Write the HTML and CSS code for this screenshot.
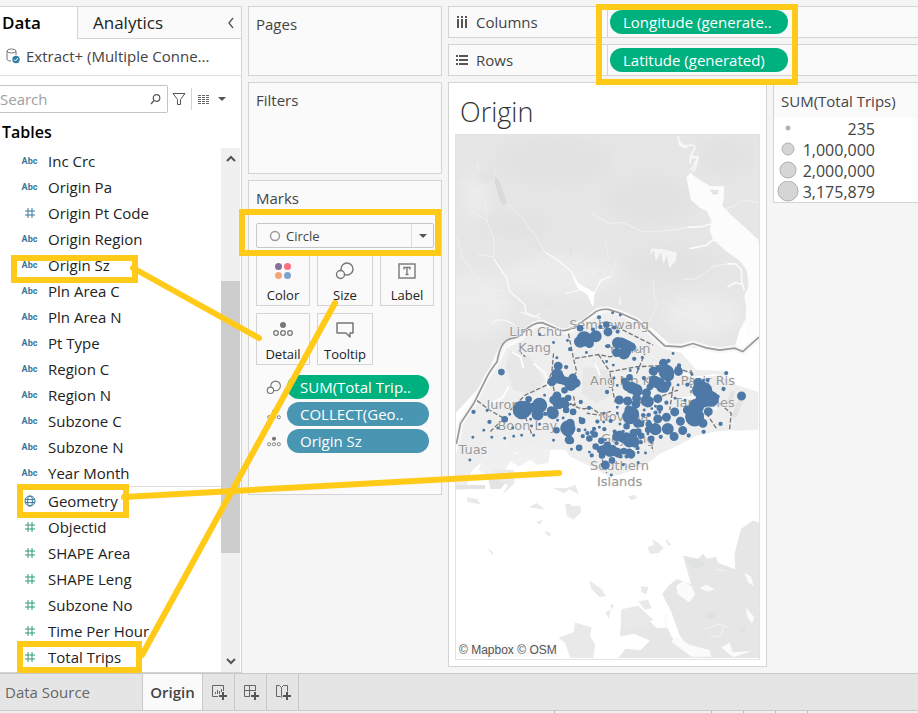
FILE: index.html
```html
<!DOCTYPE html>
<html lang="en">
<head>
<meta charset="utf-8">
<title>Origin</title>
<link rel="stylesheet" href="styles.css">
</head>
<body>
<svg class="symbols" aria-hidden="true">
  <symbol id="hash" viewBox="0 0 12 12"><path d="M4 1v10M8 1v10M1 4h10M1 8h10" fill="none" stroke="currentColor"/></symbol>
  <symbol id="globe" viewBox="0 0 12 12"><g fill="none" stroke="currentColor"><circle cx="6" cy="6" r="5"/><ellipse cx="6" cy="6" rx="2.4" ry="5"/><path d="M1 4.4h10M1 7.6h10"/></g></symbol>
  <symbol id="size" viewBox="0 0 20 18"><g fill="#fafafa" stroke="currentColor" stroke-width="1.4"><circle cx="12" cy="7" r="6"/><circle cx="5.5" cy="12.5" r="4"/></g></symbol>
  <symbol id="detail" viewBox="0 0 20 16"><circle cx="10" cy="4" r="3" fill="currentColor"/><g fill="none" stroke="currentColor" stroke-width="1.3"><circle cx="3" cy="12" r="2.3"/><circle cx="10" cy="12" r="2.3"/><circle cx="17" cy="12" r="2.3"/></g></symbol>
</svg>

<div class="workspace">
  <aside class="sidebar">
    <div class="side-tabs">
      <button class="side-tab active">Data</button>
      <button class="side-tab">Analytics</button>
      <button class="collapse" aria-label="Collapse"><svg width="8" height="12" viewBox="0 0 8 12"><path d="M6 1 2 6l4 5" fill="none" stroke="#555" stroke-width="1.3"/></svg></button>
    </div>
    <div class="source">
      <svg width="15" height="16" viewBox="0 0 15 16"><path d="M10 7V3M1 3v8c0 1.5 2 2 4 2" fill="none" stroke="#777"/><ellipse cx="5.5" cy="3" rx="4.5" ry="2" fill="none" stroke="#777"/><circle cx="10" cy="11.5" r="3.7" fill="#2f7fa5"/><path d="m8 11.5 1.5 1.5 2.5-3" fill="none" stroke="#fff"/></svg>
      <span>Extract+ (Multiple Conne...</span>
    </div>
    <div class="search-row">
      <div class="search-box">
        <input type="text" placeholder="Search" aria-label="Search">
        <svg width="11" height="11" viewBox="0 0 11 11"><g fill="none" stroke="#555" stroke-width="1.2"><circle cx="6.5" cy="4" r="3.3"/><path d="M4 6.5 1 10"/></g></svg>
      </div>
      <button class="tool" aria-label="Filter fields"><svg width="14" height="14" viewBox="0 0 14 14"><path d="M1 1.5h12L8.5 7.5v5h-3v-5z" fill="none" stroke="#555"/></svg></button>
      <button class="tool view-as" aria-label="View as"><svg width="12" height="11" viewBox="0 0 12 11"><path d="M0 1.5h12M0 3.5h12M0 5.5h12M0 7.5h12M0 9.5h12" stroke="#666" stroke-dasharray="3 1"/></svg><i class="caret"></i></button>
    </div>
    <h2 class="tables">Tables</h2>
    <div class="fields">
      <div class="field-lists">
        <ul class="dimensions">
          <li><b>Abc</b>Inc Crc</li>
          <li><b>Abc</b>Origin Pa</li>
          <li><b><svg><use href="#hash"/></svg></b>Origin Pt Code</li>
          <li><b>Abc</b>Origin Region</li>
          <li><b>Abc</b>Origin Sz</li>
          <li><b>Abc</b>Pln Area C</li>
          <li><b>Abc</b>Pln Area N</li>
          <li><b>Abc</b>Pt Type</li>
          <li><b>Abc</b>Region C</li>
          <li><b>Abc</b>Region N</li>
          <li><b>Abc</b>Subzone C</li>
          <li><b>Abc</b>Subzone N</li>
          <li><b>Abc</b>Year Month</li>
        </ul>
        <ul class="measures">
          <li class="geo"><b><svg><use href="#globe"/></svg></b>Geometry</li>
          <li><b><svg><use href="#hash"/></svg></b>Objectid</li>
          <li><b><svg><use href="#hash"/></svg></b>SHAPE Area</li>
          <li><b><svg><use href="#hash"/></svg></b>SHAPE Leng</li>
          <li><b><svg><use href="#hash"/></svg></b>Subzone No</li>
          <li><b><svg><use href="#hash"/></svg></b>Time Per Hour</li>
          <li><b><svg><use href="#hash"/></svg></b>Total Trips</li>
        </ul>
      </div>
      <div class="scrollbar">
        <svg width="12" height="8" viewBox="0 0 12 8"><path d="m2 6 4-4 4 4" fill="none" stroke="#555" stroke-width="2"/></svg>
        <div class="track"><div class="thumb"></div></div>
        <svg width="12" height="8" viewBox="0 0 12 8"><path d="m2 2 4 4 4-4" fill="none" stroke="#555" stroke-width="2"/></svg>
      </div>
    </div>
  </aside>

  <section class="cards">
    <div class="card pages"><h3>Pages</h3></div>
    <div class="card filters"><h3>Filters</h3></div>
    <div class="card marks">
      <h3>Marks</h3>
      <div class="mark-type">
        <svg width="12" height="12" viewBox="0 0 12 12"><circle cx="6" cy="6" r="4.5" fill="none" stroke="#999" stroke-width="1.4"/></svg>
        <select aria-label="Mark type"><option>Circle</option></select>
        <span class="drop"><i class="caret"></i></span>
      </div>
      <div class="mark-buttons">
        <button><svg width="18" height="18" viewBox="0 0 18 18"><circle cx="4.5" cy="4.5" r="3.5" fill="#85709b"/><circle cx="13.5" cy="4.5" r="3.5" fill="#f96f83"/><circle cx="4.5" cy="13.5" r="3.5" fill="#f4a67a"/><circle cx="13.5" cy="13.5" r="3.5" fill="#7ea2cb"/></svg>Color</button>
        <button><svg width="20" height="18"><use href="#size"/></svg>Size</button>
        <button><svg width="20" height="18" viewBox="0 0 20 18"><rect x="2" y="2" width="16" height="14" fill="none" stroke="#777" stroke-width="1.4"/><path d="M7 7.5V5.5h6v2M10 5.5v7M8.5 12.5h3" fill="none" stroke="#777" stroke-width="1.3"/></svg>Label</button>
        <button><svg width="20" height="16"><use href="#detail"/></svg>Detail</button>
        <button><svg width="20" height="18" viewBox="0 0 20 18"><path d="M2 2h16v10h-3v4l-4-4H2z" fill="none" stroke="#777" stroke-width="1.5" stroke-linejoin="round"/></svg>Tooltip</button>
      </div>
      <ul class="mark-pills">
        <li><svg width="16" height="15"><use href="#size"/></svg><span class="pill green">SUM(Total Trip..</span></li>
        <li><svg width="14" height="11"><use href="#detail"/></svg><span class="pill blue">COLLECT(Geo..</span></li>
        <li><svg width="14" height="11"><use href="#detail"/></svg><span class="pill blue">Origin Sz</span></li>
      </ul>
    </div>
  </section>

  <main class="main">
    <div class="shelf">
      <div class="shelf-name"><svg width="12" height="12" viewBox="0 0 12 12"><path d="M2 0v2M6 0v2M10 0v2M2 3v9M6 3v9M10 3v9" stroke="#555" stroke-width="2"/></svg>Columns</div>
      <span class="pill green">Longitude (generate..</span>
    </div>
    <div class="shelf">
      <div class="shelf-name"><svg width="12" height="12" viewBox="0 0 12 12"><path d="M0 2h2M0 6h2M0 10h2M3 2h9M3 6h9M3 10h9" stroke="#555" stroke-width="2"/></svg>Rows</div>
      <span class="pill green">Latitude (generated)</span>
    </div>
    <div class="canvas">
      <div class="view">
        <h1>Origin</h1>
        <div class="map">
          <svg viewBox="455 134 305 526" preserveAspectRatio="xMidYMid slice" role="img" aria-label="Map of trip origins">
            <defs><filter id="soft" x="-30%" y="-30%" width="160%" height="160%"><feGaussianBlur stdDeviation="7"/></filter></defs>
            <rect x="455" y="134" width="305" height="526" fill="#fff"/>
            <path d="M455 134h305v107l-6 8-1 20-5 20v27l-8 14-5 18-12 2-35-3-18-3-18-16-25-10-27-7-18 8-16 10-25-5-18 8-24 15-22 46-15 26-7 20z" fill="#e6e6e6"/>
            <g fill="#e2e2e2" filter="url(#soft)"><ellipse cx="555" cy="160" rx="60" ry="25"/><ellipse cx="650" cy="200" rx="45" ry="25"/><ellipse cx="515" cy="225" rx="35" ry="13"/><ellipse cx="725" cy="155" rx="30" ry="20"/><ellipse cx="670" cy="265" rx="45" ry="18"/></g>
            <g fill="#ececec" filter="url(#soft)"><ellipse cx="560" cy="275" rx="60" ry="18"/><ellipse cx="475" cy="305" rx="35" ry="32"/><ellipse cx="703" cy="315" rx="38" ry="20"/><ellipse cx="475" cy="195" rx="12" ry="20"/></g>
            <g transform="translate(450 290) scale(.33333)">
              <path d="M15 500 35 408 80 335 118 258 148 218 168 174 215 149 252 113 276 108 330 130 356 130 395 108 434 79 460 68 500 70 555 98 598 135 640 176 695 188 740 240 820 242 860 285 927 306V420L800 424 740 438 690 465 630 492 585 528 530 548 480 562 430 535 360 500 345 480 300 480 250 476 210 490 150 478 110 470 128 494 90 520 62 545 45 600H15z" fill="#eee"/>
              <path d="M15 370 90 288 60 345 30 400 15 440z" fill="#fff"/>
              <path d="M110 455 180 448 172 480 200 492 240 468 300 478 295 520 260 525 240 510 205 530 180 515 160 550 110 560 85 540z" fill="#f0f0f0"/>
              <path d="M180 180l60 20 40 70-30 45-60-15-25-70zM400 230l70 10 20 70-50 30-45-30z" fill="#e7e7e7"/>
              <path d="m110 550 60 25-20 23h-30zM16 586h88v12H16zM845 300l12 5-15 50-15-5zM870 320l15 5-25 60-15-5z" fill="#e3e3e3"/>
              <path d="M185 185l25 15 10 35M250 220l35 30 10 45M435 220l15 35M100 350l55-25 20-35M700 250l40 12 55-8 55 14M680 325l80-6 40 40" stroke="#fff" stroke-width="5" fill="none"/>
            </g>
            <g transform="translate(450 130) scale(.33333)" stroke-linejoin="round">
              <path d="m135 138 10 5 25 75-8 6-12-10-18-62z" fill="#dadada"/>
              <path d="M710 140l12-14 12 10 48 30 42 0-2 40-4 18 26 28 45 40 38 36v292h-33l-6-30 2-60-6-34 14-26-6-50-22-30-40-28-40-36-10-26 6-30-16-30-20-10-26-22z" fill="#fcfcfc"/>
              <path d="M780 176l10 16 16-2v-12z" fill="#e4e4e4"/>
              <path d="M685 15q4 33 33 28t10 22 18 11q-15 30-22 42M688 28q-3 20 25 22M722 100q-5-35 22-18-5 30-14 40" stroke="#f7f7f7" stroke-width="5" fill="none"/>
              <path d="m805 285-25-4-20 6-45 3M830 318l-24 12-16-2-20 16-50 10M885 480l-8-24-2-40-18-16-24 0M880 462l-22-6-24 14M832 345l30 8M792 232l-14 6" stroke="#fbfbfb" stroke-width="5" fill="none"/>
              <path d="m715 290-30 6-55 6-55 0-55-26-45 2-55-34M835 400l-45 8-30 25-25 12-35 2M825 235l30-8 20-20 50 8" stroke="#f2f2f2" stroke-width="3" fill="none"/>
              <path d="m580 352 60 4 42 10-5 28-18 18-8-38-10 26-8-34-15 26-6-34-12 18 4-22z" fill="#f5f5f5"/>
              <path d="M428 525l2-35-45-28-22-40-40-33-40-25M432 490l20-40 32-12M130 385l38 56 11 42 45 40 3 25 45 17" stroke="#fbfbfb" stroke-width="4" fill="none"/>
              <path d="m285 365-30-50-45-60-43-35M484 438l15-45M25 145l80 63 5 65 20 50v62M179 483l-14-4-60 1-70-100-15-60M30 515l60-5 40 12 45-5M640 510l40 35 40 10 62 40M680 505l40 10 50 48M612 450q-5 45 10 70l-22 55M80 370l50 10M465 330l10 50M70 245l40 25M85 130l-5-30" stroke="#f0f0f0" stroke-width="3" fill="none"/>
              <path d="M125 580q20-25 70 5M210 545l40 15 20-10M510 500v25M345 490l55-15" stroke="#f8f8f8" stroke-width="4" fill="none"/>
              <path d="M428 525l4-38-48-25-14-20 14 30 30 20z" fill="#fff" stroke="#fff" stroke-width="4"/>
              <g fill="#dfe3e1"><path d="m82 130 12-15 15 8 15-10 10 15-12 20-20 12-15-12zM250 345l15-12 12 25-20-3zM358 350l15-6-8 28-9 2zM278 520l20-10-3 22zM310 525l12-5 3 8zM440 425l15 5-5 8z" opacity=".6"/></g>
            </g>
            <g transform="translate(450 470) scale(.33333)">
              <path d="m700 258 45 10 15-15 12 15 28-6 5 18 52 20-2-45 10-42 10-35 35-25 20 6v408H505l22-28 45 5 28-30-48-20-42 8 5-65 45-20 60 60 33-2 12 28 42 44 28 14-45-62-25-70-28-55 20-25 25-20 42 16z" fill="#e6e6e6"/>
              <path d="M515 420l50-10 45 42-30 20-55 12-12-45zM325 505l45-15 5-30 50 15-5 25 15 25-5 42h-70l-15-45zM418 333l35 25 15 22-20 3-25-25zM345 105l12-3 10 7 25 0v20l-22 22-20-12zM235 113l25-13 23 20zM258 158l20-8-8 15zM283 183l18 8v10l-12-5zM592 235l20-10-5-15 15 8 20 18-15 15-25 3zM650 208l15 18-8 3-8-12zM565 395l30-3 10 25-20 5zM573 350l22 3-5 22-15-5zM50 84l30 4 10 16-40-7zM110 236l15 10 4 14-10-12zM307 54l40 2 30-10 8 28-28-15-15 12zM535 80l18-5 10 10-20 7zM130 0h60l3 40-36 35 15-30-30-10zM480 405l12 3-8 12zM467 430l15-10-6 30z" fill="#e9e9e9"/>
              <path d="M680 350l20-15 25 15 12 25-18 25-35-25zM750 358l20-12 25 15-20 6zM890 415l25 30-8 18-15-22zM885 310l20 12 8 28-18-12zM645 430l10 15-5 35-10-15zM680 500l40 28 60 15 5 20h-60l-60-45zM840 520l10 30 60-5-60 20-35-30z" fill="#fbfbfb"/>
              <path d="M768 480l40-15 25 10M820 475l-5 25-35 5M800 300l30 5" stroke="#f0f0f0" stroke-width="4" fill="none"/>
              <path d="m765 438 20-12 20 2-12 20-20 2zM710 275l30-8 30 12-20 18-22-3zM870 480l18-8 4 12-15 5z" fill="#dfe2e1"/>
            </g>
            <g transform="translate(450 290) scale(.33333)" fill="none" stroke-linecap="round">
              <path d="M18 460 30 400 70 340 110 260 140 215Q150 155 210 140L250 103 276 97 330 122 350 122 400 96 445 60 470 57 510 68 560 90 600 125 645 167 695 170 730 160 770 173 810 180 855 174 880 184 927 142" stroke="#f7f7f7" stroke-width="18"/>
              <path d="M18 460 30 400 70 340 110 260Q120 240 140 215 150 150 182 145 210 142 220 125 245 97 276 97L330 120Q355 125 385 102L430 70Q445 55 475 57L510 68 560 90 600 125 645 167 695 170 730 160 770 173 810 180 855 174 880 184 927 142" stroke="#999" stroke-width="5"/>
            </g>
            <g class="boundaries" transform="translate(450 290) scale(.33333)">
              <path d="M80 332 120 362 160 385 120 425M180 360 225 315 290 285 305 245 310 190M305 270l15 70 55 5-5-30M355 130l15 75 10 40-15 20M375 205 445 193 480 200 530 188 580 175M445 193 480 245 560 230 640 226M205 180 225 200M360 340q35 25 60 12l30 20 35-8M450 490l20 60M480 250l8 50 8 38M520 380q30-20 40-5M500 110l110 55M670 290 660 360M724 240v70M810 340l35 30-5 50M770 370l30 45M225 380l20 55M560 250l25-60M700 240l30 10M560 340l60-15 65-25M600 445l10 40M480 380l-70-10"/>
            </g>
            <g class="places">
              <text x="509" y="336">Lim Chu</text><text x="518" y="352">Kang</text>
              <text x="569" y="329">Sembawang</text><text x="608" y="353">Yishun</text>
              <text x="590" y="385">Ang Mo Kio</text><text x="681" y="385">Pasir Ris</text>
              <text x="674" y="407">Tampines</text><text x="486" y="409">Jurong</text>
              <text x="497" y="430">Boon Lay</text><text x="599" y="421">Novena</text>
              <text x="601" y="443">Geylang</text><text x="458" y="454">Tuas</text>
              <text x="590" y="470">Southern</text><text x="597" y="486">Islands</text>
            </g>
            <g class="dots" transform="translate(450 290) scale(.33333)">
              <path stroke-width="9" d="M268 133h0M310 157h0M320 203h0M283 316h0M110 361h0M178 373h0M67 442h0M58 511h0M100 421h0M124 442h0M163 445h0M190 439h0M214 436h0M250 436h0M142 414h0M187 414h0M244 408h0M268 403h0M241 388h0M310 451h0M322 391h0M339 384h0M364 478h0M352 151h0M409 187h0M470 214h0M488 67h0M511 74h0M469 168h0M541 241h0M490 225h0M577 202h0M565 235h0M670 190h0M727 253h0M761 271h0M706 331h0M685 285h0M714 284h0M676 325h0M484 556h0M520 525h0M565 518h0M587 490h0M462 370h0M448 412h0M405 420h0M418 487h0M502 370h0M510 402h0M502 352h0M492 264h0M502 286h0M390 385h0M583 360h0M580 376h0M592 402h0M617 349h0M616 402h0M630 367h0M594 432h0M580 396h0M606 356h0M650 338h0M461 396h0M494 448h0M466 450h0M565 488h0M604 458h0M520 424h0M478 462h0"/>
              <path stroke-width="13" d="M69 366h0M117 396h0M447 81h0M429 118h0M451 110h0M493 112h0M503 124h0M474 168h0M360 177h0M348 231h0M285 372h0M392 336h0M417 354h0M442 395h0M386 421h0M463 418h0M432 417h0M398 439h0M471 306h0M553 206h0M582 264h0M774 270h0M830 249h0M822 297h0M813 402h0M762 426h0M717 437h0M633 441h0M425 497h0M482 393h0M364 400h0M626 238h0M656 212h0M688 226h0M713 284h0M650 338h0M580 376h0M597 375h0M597 396h0M617 368h0M804 320h0M540 492h0M573 457h0M494 425h0M563 475h0M530 500h0M512 500h0M545 500h0M412 430h0M426 428h0M500 460h0"/>
              <path stroke-width="20" d="M153 246h0M235 328h0M163 388h0M390 114h0M469 103h0M343 301h0M354 324h0M348 360h0M369 366h0M396 393h0M387 474h0M362 453h0M319 421h0M434 434h0M418 446h0M539 262h0M523 273h0M600 291h0M604 447h0M630 354h0M454 453h0M437 470h0M329 346h0M328 250h0M530 409h0M573 402h0M597 403h0M529 437h0M510 432h0M517 448h0M650 291h0M456 497h0M450 480h0M407 150h0M486 512h0M522 484h0M541 442h0M505 494h0M538 486h0M574 438h0M613 246h0M626 237h0M685 238h0M655 282h0M595 420h0M472 465h0M565 425h0"/>
              <path stroke-width="27" d="M324 228h0M368 264h0M320 318h0M339 335h0M303 362h0M317 250h0M474 125h0M500 187h0M305 275h0M352 277h0M378 279h0M319 324h0M508 330h0M533 333h0M558 342h0M624 387h0M650 382h0M675 366h0M692 394h0M699 422h0M673 440h0M617 418h0M624 326h0M641 219h0M686 244h0M613 270h0M466 526h0M532 290h0M560 325h0M590 309h0M540 365h0M563 400h0M776 365h0M745 277h0M760 400h0M500 440h0M515 440h0M554 452h0M552 430h0M487 478h0M502 487h0M418 160h0M530 185h0M610 243h0M713 360h0M876 318h0M468 475h0M543 493h0M360 400h0M357 450h0M537 360h0M555 300h0"/>
              <path stroke-width="36" d="M325 262h0M362 285h0M262 374h0M325 340h0M308 370h0M390 155h0M437 138h0M504 158h0M530 168h0M654 248h0M655 256h0M545 293h0M543 370h0M617 418h0M654 417h0M628 280h0M590 332h0M560 300h0M594 335h0M354 423h0M522 190h0M615 275h0M637 290h0M538 455h0M480 484h0M756 290h0M738 345h0M740 375h0"/>
              <path stroke-width="46" d="M212 357h0M225 356h0M268 346h0M402 146h0M540 380h0M353 415h0M545 373h0M650 247h0M750 300h0M765 300h0M740 350h0M730 380h0M740 378h0M774 320h0M785 327h0M760 330h0"/>
              <path stroke-width="56" d="M215 360h0M735 382h0M768 323h0"/>
              <path stroke-width="26" d="M230 358 265 345M385 153 435 140M315 265 375 280M310 330 345 343M515 155 545 170M610 270 645 295M530 285 565 305M760 320 735 385M502 438 555 460M455 480 500 487"/>
            </g>
          </svg>
          <span class="credit">© Mapbox © OSM</span>
        </div>
      </div>
      <div class="legend">
        <h3>SUM(Total Trips)</h3>
        <ul>
          <li><svg viewBox="0 0 24 21"><circle cx="12" cy="10" r="2" fill="#b0b0b0"/></svg><span>235</span></li>
          <li><svg viewBox="0 0 24 21"><circle cx="12" cy="10" r="6"/></svg><span>1,000,000</span></li>
          <li><svg viewBox="0 0 24 21"><circle cx="12" cy="10" r="8"/></svg><span>2,000,000</span></li>
          <li><svg viewBox="0 0 24 21"><circle cx="12" cy="10" r="10"/></svg><span>3,175,879</span></li>
        </ul>
      </div>
    </div>
  </main>

  <svg class="annotations" aria-hidden="true">
    <rect x="14" y="258" width="121" height="22"/>
    <rect x="20" y="487" width="106" height="28"/>
    <rect x="20" y="644" width="119" height="26"/>
    <rect x="242" y="212" width="196" height="41"/>
    <rect x="599" y="7" width="196" height="75"/>
    <path d="M133 268 259 338M124 497 559 473M142 655 335 303"/>
  </svg>
</div>

<nav class="sheets">
  <button class="data-source">Data Source</button>
  <button class="sheet active">Origin</button>
  <button class="add" aria-label="New worksheet"><svg width="16" height="16" viewBox="0 0 16 16"><path d="M12.5 7V1.5h-11v11H7M4.500 8v2M6.500 6v4M8.500 7v3M10.500 5v3" fill="none" stroke="#666"/><path d="M12 8v8M8 12h8" stroke="#555" stroke-width="2"/></svg></button>
  <button class="add" aria-label="New dashboard"><svg width="16" height="16" viewBox="0 0 16 16"><path d="M12.5 7V1.5h-11v11H7M6.500 1v11M1 6.500h11" fill="none" stroke="#666"/><path d="M12 8v8M8 12h8" stroke="#555" stroke-width="2"/></svg></button>
  <button class="add" aria-label="New story"><svg width="16" height="16" viewBox="0 0 16 16"><path d="M7.500 12.500 6.500 13.500l-1-1h-4v-11h3l2 2 2-2h4v6M6.500 3.500v9" fill="none" stroke="#666"/><path d="M12 8v8M8 12h8" stroke="#555" stroke-width="2"/></svg></button>
</nav>
<footer class="status"><span></span><span></span><span></span><span></span><span></span></footer>
</body>
</html>
```
FILE: styles.css
```css
* { box-sizing: border-box; }
body {
  margin: 0;
  height: 100vh;
  display: flex;
  flex-direction: column;
  overflow: hidden;
  background: #f5f5f5;
  color: #444;
  font: 15px/20px "Open Sans", "Noto Sans", sans-serif;
}
button, input, select { font: inherit; color: inherit; }
button { background: none; border: 0; padding: 0; }
ul { list-style: none; margin: 0; padding: 0; }
h1, h2, h3 { margin: 0; font-weight: 400; }
h3 { font-size: 15px; }
svg { display: block; flex: none; }
.symbols { position: absolute; width: 0; height: 0; }
.workspace {
  position: relative;
  flex: 1;
  min-height: 0;
  display: flex;
  gap: 6px;
  padding: 6px 0;
}
.caret {
  border: 4px solid transparent;
  border-top-color: #555;
  border-bottom: 0;
}

.sidebar {
  width: 242px;
  margin-bottom: -6px;
  flex: none;
  display: flex;
  flex-direction: column;
  background: #fff;
  border: 1px solid #d4d4d4;
  border-left: 0;
}
.side-tabs { display: flex; height: 32px; font-size: 17px; }
.side-tab { padding: 0 15px; color: #222; background: #fafafa; border-bottom: 1px solid #d4d4d4; border-left: 1px solid #d4d4d4; }
.side-tab.active { width: 77px; padding: 0 2px; text-align: left; font-weight: 600; color: #000; background: #fff; border: 0; }
.collapse { flex: 1; display: flex; align-items: center; justify-content: flex-end; padding-right: 6px; background: #fafafa; border-bottom: 1px solid #d4d4d4; }
.source { display: flex; align-items: center; gap: 5px; height: 37px; padding: 0 0 2px 6px; color: #444; border-bottom: 1px solid #e0e0e0; }
.search-row { display: flex; align-items: center; height: 46px; }
.search-box { display: flex; align-items: center; width: 168px; height: 28px; padding-right: 6px; border: 1px solid #c4c4c4; border-left: 0; border-radius: 0 2px 2px 0; }
.search-box input { flex: 1; min-width: 0; padding: 0; border: 0; outline: 0; background: none; }
.search-box input::placeholder { color: #a0a0a0; }
.tool { display: flex; align-items: center; height: 22px; margin-left: 4px; }
.view-as { gap: 8px; margin-left: 5px; padding-left: 6px; border-left: 1px solid #d4d4d4; }
.tables { padding: 0 2px; font-size: 16px; font-weight: 600; color: #000; }
.fields { flex: 1; min-height: 0; display: flex; margin-top: 6px; }
.field-lists { flex: 1; overflow: hidden; color: #222; }
.field-lists li { display: flex; align-items: center; height: 26px; }
.field-lists b { width: 27px; margin: 0 5px 0 16px; color: #36789b; font: 700 9px/12px Roboto, sans-serif; text-align: center; }
.field-lists b svg { width: 12px; height: 12px; margin: 0 auto; }
.measures { margin-left: 16px; padding-top: 1px; border-top: 1px solid #ddd; }
.measures b { margin-left: 0; color: #2e9c73; }
.measures .geo b { color: #36789b; }
.scrollbar { width: 19px; margin-right: 1px; display: flex; flex-direction: column; align-items: center; gap: 4px; padding: 7px 0; background: #f0f0f0; }
.track { flex: 1; align-self: stretch; padding: 0; display: flex; flex-direction: column; }
.track::before { content: ""; flex: 114; }
.thumb { flex: 272; background: #cdcdcd; }
.track::after { content: ""; flex: 100; }

.cards { width: 194px; flex: none; display: flex; flex-direction: column; gap: 6px; }
.card { background: #fafafa; border: 1px solid #d4d4d4; padding: 7px; }
.pages { height: 70px; }
.filters { height: 92px; }
.marks { min-height: 315px; }
.mark-type { display: flex; align-items: center; height: 25px; margin-top: 15px; padding-left: 12px; border: 1px solid #c8c8c8; border-radius: 2px; font-size: 13px; }
.mark-type select { flex: 1; appearance: none; border: 0; outline: 0; background: none; padding: 0 5px; }
.drop { width: 22px; height: 23px; display: grid; place-content: center; border-left: 1px solid #ddd; }
.mark-buttons { display: grid; grid-template-columns: 54px 56px 54px; gap: 7px; margin-top: 6px; font-size: 13px; color: #222; }
.mark-buttons button { height: 52px; display: flex; flex-direction: column; align-items: center; justify-content: space-between; padding: 7px 0 0; border: 1px solid #d4d4d4; color: #222; }
.mark-buttons svg, .mark-pills svg { color: #777; }
.mark-pills { display: grid; gap: 3px; margin-top: 10px; padding-right: 5px; }
.mark-pills li { display: grid; grid-template-columns: 21px 1fr; justify-items: center; align-items: center; padding-left: 7px; column-gap: 3px; }
.mark-pills .pill { justify-self: stretch; width: auto; }
.pill { width: 178px; height: 24px; padding: 0 13px; border-radius: 12px; color: #fff; font-weight: 500; line-height: 24px; white-space: nowrap; overflow: hidden; }
.green { background: #00b180; }
.blue { background: #4996b2; }

.main { flex: 1; min-width: 0; display: flex; flex-direction: column; gap: 6px; }
.shelf { display: flex; height: 32px; padding-top: 3px; background: #fafafa; border: 1px solid #d4d4d4; border-right: 0; }
.shelf-name { width: 159px; margin: -3px 2px 0 0; display: flex; align-items: center; gap: 8px; padding-left: 7px; border-right: 1px solid #d4d4d4; }
.canvas { flex: 1; min-height: 0; display: flex; align-items: flex-start; gap: 6px; }
.view { flex: 1; align-self: stretch; display: flex; flex-direction: column; padding: 8px 6px 6px; background: #fff; border: 1px solid #d4d4d4; }
h1 { padding: 0 5px 2px; font: 300 27px/41px "Open Sans", sans-serif; color: #333; }
.map { position: relative; flex: 1; min-height: 0; }
.map > svg { width: 100%; height: 100%; border: 1px solid #e2e2e2; }
.boundaries { fill: none; stroke: #777; stroke-width: 4; stroke-dasharray: 14 6; }
.places { font: 13px "DejaVu Sans", sans-serif; fill: #999; stroke: #f3f3f3; stroke-width: 1px; paint-order: stroke; }
.dots { fill: none; stroke: #4e79a7; stroke-linecap: round; }
.credit { position: absolute; left: 3px; bottom: 3px; padding: 0 1px; background: #fafafa; color: #555; font: 12px/13px "Liberation Sans", sans-serif; }
.legend { width: 145px; flex: none; background: #fff; border: 1px solid #d4d4d4; border-right: 0; }
.legend h3 { padding: 8px 7px 7px; background: #fafafa; white-space: nowrap; }
.legend li { display: flex; align-items: center; height: 21px; padding-left: 2px; font-size: 16px; }
.legend svg { width: 24px; height: 21px; fill: #d5d5d5; stroke: #b0b0b0; stroke-width: 1px; }
.legend span { width: 75px; text-align: right; }

.annotations { position: absolute; inset: 0; width: 100%; height: 100%; fill: none; stroke: #ffca18; stroke-width: 6px; stroke-linecap: round; pointer-events: none; }

.sheets { flex: none; display: flex; height: 38px; background: #e5e5e5; border: solid #c9c9c9; border-width: 1px 0; color: #666; }
.sheets button { border-right: 1px solid #c9c9c9; }
.data-source { width: 143px; padding-left: 5px; text-align: left; }
.sheet.active { width: 60px; background: #fafafa; font-weight: 600; color: #444; }
.add { width: 32px; display: grid; place-content: center; }
.status { flex: none; height: 2px; display: flex; justify-content: flex-end; background: #f0f0f0; }
.status span { width: 32px; border-left: 1px solid #bbb; }
.status span:first-child { width: 157px; }
.status span:last-child { width: 111px; }
```
